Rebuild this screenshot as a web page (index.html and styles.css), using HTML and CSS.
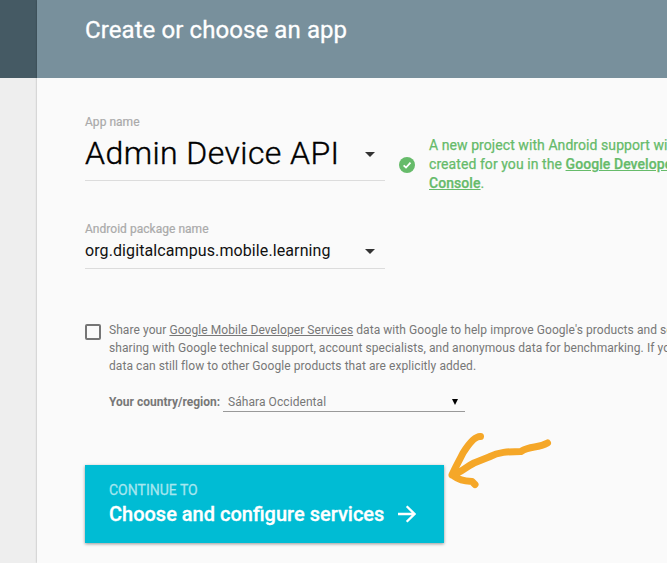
FILE: index.html
```html
<!DOCTYPE html>
<html lang="en">
<head>
<meta charset="utf-8">
<title>Create or choose an app</title>
<link rel="stylesheet" href="styles.css">
</head>
<body>
<div class="page">
  <aside class="rail"><div class="rail-top"></div></aside>
  <main class="panel">
    <header class="header"><h1><span>Create or choose an app</span></h1></header>
    <div class="content">
      <section class="app-row">
        <div class="field field-app">
          <label><span>App name</span></label>
          <div class="value"><span>Admin Device API</span><i class="caret"></i></div>
        </div>
        <div class="notice">
          <svg class="check" viewBox="0 0 16 16"><circle cx="8" cy="8" r="8"/><path d="M4.6 8.4 7 10.5 11.5 5.7"/></svg>
          <p><span>A new project with Android support will be</span><br><span>created for you in the </span><a>Google Developers</a><br><a>Console</a>.</p>
        </div>
      </section>
      <section class="field field-package">
        <label><span>Android package name</span></label>
        <div class="value"><span>org.digitalcampus.mobile.learning</span><i class="caret"></i></div>
      </section>
      <section class="share">
        <div class="checkbox"></div>
        <div class="share-body">
          <p><span>Share your <a>Google Mobile Developer Services</a> data with Google to help improve Google's products and services</span><br><span>sharing with Google technical support, account specialists, and anonymous data for benchmarking. If you</span><br><span>data can still flow to other Google products that are explicitly added.</span></p>
          <div class="region"><b>Your country/region:</b><div class="select"><span>Sáhara Occidental</span><i></i></div></div>
        </div>
      </section>
      <div class="action">
        <button class="continue">
          <small><span>CONTINUE TO</span></small>
          <strong><span>Choose and configure services</span><svg viewBox="0 0 18 18"><path d="M0 9H16M8.7 1.2 16.5 9 8.7 16.8"/></svg></strong>
        </button>
        <svg class="pointer" viewBox="0 0 140 80"><path d="M50.500 16.500C45 16 38 25 33 33C28 43 25 48 22 55C29 60 33 61 42 61.500L45 64.500M22 55C31 53 34 48 44 43L59 37C69 32 77 31.500 91 31.500C101 25 107 29 117.500 23"/></svg>
      </div>
    </div>
  </main>
</div>
</body>
</html>
```

FILE: styles.css
```css
* { box-sizing: border-box; }
body { margin: 0; font-family: Roboto, "Liberation Sans", sans-serif; background: #fafafa; overflow: hidden; }
h1, p { margin: 0; }
.page { display: flex; width: 667px; height: 563px; overflow: hidden; }
.rail { width: 37px; flex: none; background: #eee; }
.rail-top { height: 78px; background: #455a64; }
.panel { flex: 1; min-width: 0; background: #fafafa; box-shadow: 0 0 2px rgba(0,0,0,.3); }
.header { height: 78px; padding: 14px 48px; background: #78909c; color: #fff; }
h1 { font-size: 24px; line-height: 32px; font-weight: 400; white-space: nowrap; letter-spacing: .09px; -webkit-text-stroke: .3px #fff; }
.content { padding: 36px 0 0 48px; white-space: nowrap; }
.app-row { display: flex; height: 107px; }
.field { width: 300px; flex: none; }
label { display: block; height: 16px; font-size: 12px; line-height: 16px; color: #aaa; letter-spacing: .03px; -webkit-text-stroke: .2px #aaa; }
.value { display: flex; align-items: center; justify-content: space-between; padding-right: 10px; border-bottom: 1px solid #dcdcdc; color: #111; }
.field-app .value { height: 51px; padding-bottom: 4px; font-size: 32px; font-weight: 300; letter-spacing: .43px; color: #000; -webkit-text-stroke: .4px #000; }
.field-package { height: 101px; }
.field-package .value { height: 32px; padding-bottom: 4px; font-size: 16px; letter-spacing: .1px; }
.caret { margin-top: 2px; border: 5px solid transparent; border-top-color: #333; border-bottom: 0; }
.notice { display: flex; padding: 22px 0 0 14px; color: #66bb6a; font-size: 14px; line-height: 19px; letter-spacing: .07px; -webkit-text-stroke: .25px #66bb6a; }
.notice p { margin-left: 14px; }
.notice a { font-weight: 500; text-decoration: underline; }
.check { width: 16px; height: 16px; margin-top: 21px; fill: #66bb6a; }
.check path { fill: none; stroke: #fff; stroke-width: 1.8; }
.share { display: flex; height: 143px; color: #777; font-size: 12px; line-height: 18px; letter-spacing: .07px; }
.checkbox { flex: none; width: 16px; height: 16px; margin: 2px 8px 0 0; border: 2px solid #757575; border-radius: 2px; }
.share-body { margin-top: -1px; }
.share a { text-decoration: underline; }
.share p { height: 54px; }
.region { display: flex; margin-top: 18px; }
.region b { width: 111px; letter-spacing: 0; }
.select { width: 242px; height: 19px; margin-left: 3px; padding: 0 7px 0 5px; border-bottom: 1px solid #999; display: flex; align-items: center; justify-content: space-between; }
.select i { border: 3.5px solid transparent; border-top: 6px solid #000; border-bottom: 0; }
.action { position: relative; }
.continue { display: block; width: 359px; height: 78px; border: 0; padding: 0 24px; margin: 0; font-family: inherit; color: #fff; text-align: left; background: #00bcd4; box-shadow: 0 1px 3px rgba(0,0,0,.4); }
.continue small { display: block; font-size: 14px; line-height: 20px; color: #a6e6ef; -webkit-text-stroke: .3px #a6e6ef; }
.continue strong { display: flex; align-items: center; font-size: 20px; line-height: 28px; font-weight: 500; -webkit-text-stroke: .3px #fff; }
.continue svg { width: 18px; height: 18px; margin-left: 14px; fill: none; stroke: #fff; stroke-width: 2.3; }
.pointer { position: absolute; left: 345px; top: -45px; width: 140px; height: 80px; fill: none; stroke: #f5a728; stroke-width: 7; stroke-linecap: round; stroke-linejoin: round; }
```
